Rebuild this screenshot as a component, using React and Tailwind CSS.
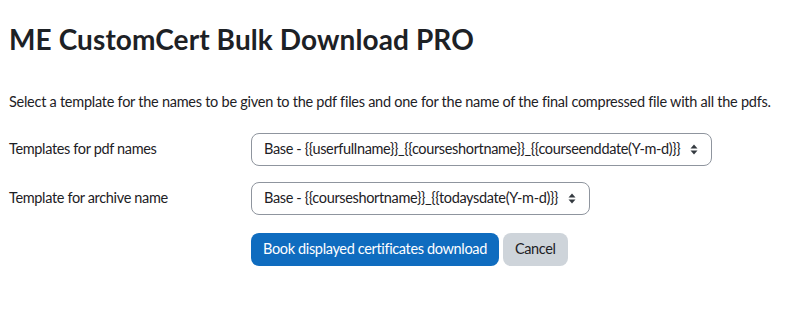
import React from "react";

function Caret() {
  return (
    <svg width="8" height="11" viewBox="0 0 8 11" className="ml-[10px] shrink-0">
      <path d="M4 0.5 L7.5 4.5 H0.5 Z" fill="#343a40" />
      <path d="M4 10.5 L7.5 6.5 H0.5 Z" fill="#343a40" />
    </svg>
  );
}

function FakeSelect({ text }) {
  return (
    <div className="flex items-center h-[33px] border border-[#8f959e] rounded-[8px] pl-[12px] pr-[13px] text-[#1d2125] bg-white">
      <span className="whitespace-nowrap">{text}</span>
      <Caret />
    </div>
  );
}

export default function App() {
  return (
    <div
      className="w-[800px] h-[311px] bg-white text-[#1d2125] px-[9px] overflow-hidden"
      style={{ fontFamily: 'Lato, "Noto Sans", sans-serif' }}
    >
      <h2 className="text-[28px] font-bold leading-[1.2] pt-[23px] tracking-[0.1px]">
        ME CustomCert Bulk Download PRO
      </h2>
      <p className="text-[14.5px] mt-[34px] leading-[22px] whitespace-nowrap tracking-[-0.26px]">
        Select a template for the names to be given to the pdf files and one for the name of the final compressed file with all the pdfs.
      </p>
      <div className="text-[14.5px] mt-[20px] tracking-[-0.35px]">
        <div className="flex items-center">
          <div className="w-[242px]">Templates for pdf names</div>
          <FakeSelect text="Base - {{userfullname}}_{{courseshortname}}_{{courseenddate(Y-m-d)}}" />
        </div>
        <div className="flex items-center mt-[16px]">
          <div className="w-[242px]">Template for archive name</div>
          <FakeSelect text="Base - {{courseshortname}}_{{todaysdate(Y-m-d)}}" />
        </div>
        <div className="flex items-center mt-[18px] pl-[242px] gap-[4px]">
          <button className="h-[33px] px-[12px] rounded-[8px] bg-[#0f6cbf] text-white">
            Book displayed certificates download
          </button>
          <button className="h-[33px] px-[12px] rounded-[8px] bg-[#ced4da] text-[#1d2125]">
            Cancel
          </button>
        </div>
      </div>
    </div>
  );
}
